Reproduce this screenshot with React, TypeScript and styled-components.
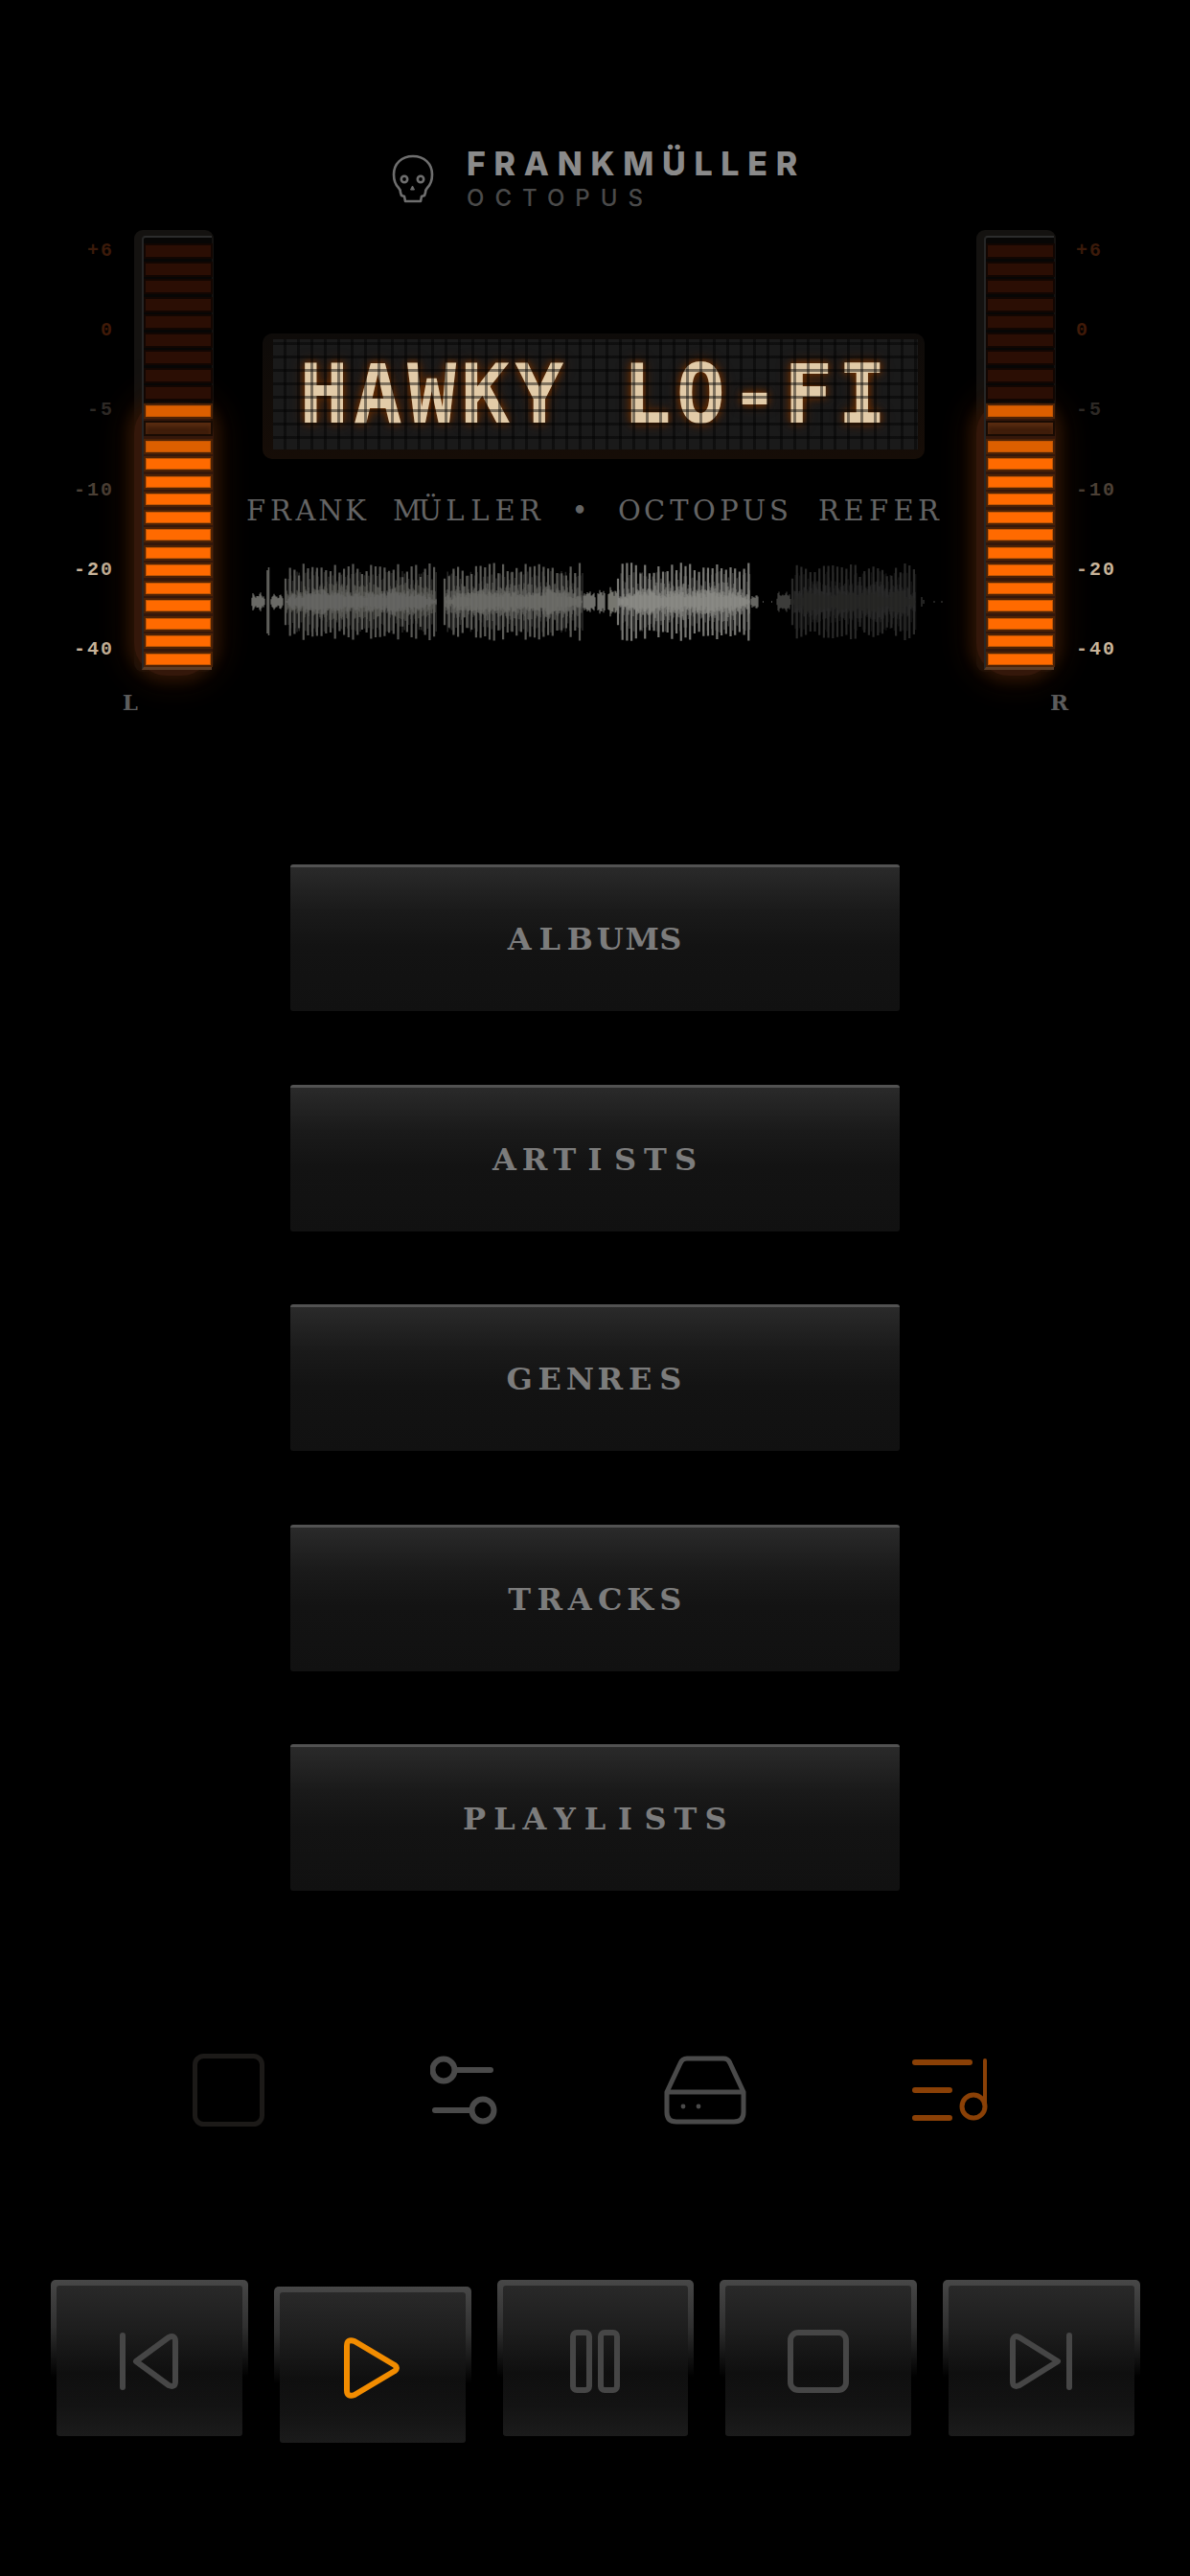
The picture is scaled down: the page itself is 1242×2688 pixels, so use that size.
import React from 'react';
import styled, { createGlobalStyle } from 'styled-components';

const MENU_ITEMS = ['ALBUMS', 'ARTISTS', 'GENRES', 'TRACKS', 'PLAYLISTS'];
const SCALE = [
  { text: '+6', color: '#3b1a0a' },
  { text: '0', color: '#401a08' },
  { text: '-5', color: '#2e2a26' },
  { text: '-10', color: '#4c4036' },
  { text: '-20', color: '#c9b59b' },
  { text: '-40', color: '#c9b59b' },
];

type Level = 'off' | 'hot' | 'flicker' | 'lit';

// top to bottom: 9 off, flickering band around -5, then solid
const SEGMENTS: Level[] = [
  ...Array<Level>(9).fill('off'),
  'hot',
  'flicker',
  'hot',
  ...Array<Level>(12).fill('lit'),
];

// small seeded generator so the wave form stays the same on every load
const makeRandom = (seed: number) => () => {
  seed = (seed * 16807) % 2147483647;
  return seed / 2147483647;
};

const CENTER = 45;

const bars = (from: number, to: number, step: number, min: number, max: number, seed: number) => {
  const random = makeRandom(seed);
  let d = '';
  for (let x = from; x < to; x += step) {
    const h = min + (max - min) * Math.sqrt(random());
    d += `M${x.toFixed(1)} ${(CENTER - h).toFixed(1)}V${(CENTER + h).toFixed(1)}`;
  }
  return d;
};

const blob = (from: number, to: number, height: number, noise: number, seed: number) => {
  const random = makeRandom(seed);
  let d = '';
  for (let x = from; x < to; x += 1) {
    const t = (x - from) / (to - from);
    const env = Math.min(1, Math.min(t, 1 - t) * 8) * (0.7 + 0.3 * Math.sin(t * 19 + seed) * Math.sin(t * 7));
    const h = height * env + random() * noise;
    d += `M${x} ${(CENTER - h).toFixed(1)}V${(CENTER + h).toFixed(1)}`;
  }
  return d;
};

const WaveSection: React.FC<{ from: number; to: number; seed: number; color: string; core: string }> = ({
  from,
  to,
  seed,
  color,
  core,
}) => (
  <>
    <path d={bars(from + 1, to, 2.2, 12, 32, seed + 7)} stroke={color} strokeWidth="1.6" opacity="0.4" />
    <path d={bars(from, to, 4.7, 24, 41, seed)} stroke={color} strokeWidth="2.2" opacity="0.95" />
    <path d={blob(from, to, 9, 13, seed + 3)} stroke={color} strokeWidth="1.2" opacity="0.8" />
    <path d={blob(from, to, 7, 7, seed + 5)} stroke={core} strokeWidth="1" opacity="0.9" />
  </>
);

const Waveform: React.FC = () => (
  <WaveSvg viewBox="0 0 730 90" aria-hidden="true">
    <g fill="none">
      <path d={blob(2, 17, 8, 2, 5)} stroke="#6a6a66" strokeWidth="1.2" />
      <path d="M19 12V78M20.5 9V80" stroke="#5e5e5a" strokeWidth="1.6" />
      <path d={blob(22, 36, 7, 2, 9)} stroke="#6a6a66" strokeWidth="1.2" />
      <WaveSection from={38} to={196} seed={11} color="#5c5c58" core="#6c6c68" />
      <WaveSection from={204} to={348} seed={23} color="#60605c" core="#72726e" />
      <path d={blob(348, 362, 9, 3, 13)} stroke="#6f6f6b" strokeWidth="1.2" />
      <path d={blob(363, 372, 12, 3, 14)} stroke="#6f6f6b" strokeWidth="1.2" />
      <path d={blob(374, 385, 13, 3, 15)} stroke="#76766f" strokeWidth="1.2" />
      <WaveSection from={385} to={523} seed={37} color="#7e7e7a" core="#8f8f8b" />
      <path d={blob(523, 532, 6, 2, 16)} stroke="#666662" strokeWidth="1.2" />
      <path d="M536 45H537M545 45H546" stroke="#4a4a48" strokeWidth="2" />
      <path d={blob(550, 566, 9, 2, 17)} stroke="#3c3c3a" strokeWidth="1.2" />
      <WaveSection from={567} to={696} seed={51} color="#2b2b2a" core="#262625" />
      <path d="M702 40V50M704 43V47M715 44V46M723 44V46" stroke="#2e2e2d" strokeWidth="1.5" />
    </g>
  </WaveSvg>
);

// the labels are set in a fixed pitch like a typewriter, the serif font we have is proportional
const SlabText: React.FC<{ text: string; pitch: number }> = ({ text, pitch }) => (
  <>
    {text.split('').map((char, i) => (
      <SlabChar key={i} $pitch={pitch}>
        {char}
      </SlabChar>
    ))}
  </>
);

const Meter: React.FC<{ side: 'left' | 'right' }> = ({ side }) => {
  const scale = (
    <Scale $side={side}>
      {SCALE.map((s) => (
        <ScaleMark key={s.text} $color={s.color}>
          {s.text}
        </ScaleMark>
      ))}
    </Scale>
  );

  return (
    <MeterGroup $side={side}>
      <MeterRow>
        {side === 'left' && scale}
        <MeterFrame>
          <MeterGlow />
          <MeterWell>
            {SEGMENTS.map((level, i) => (
              <Segment key={i} $level={level} />
            ))}
          </MeterWell>
        </MeterFrame>
        {side === 'right' && scale}
      </MeterRow>
      <Channel $side={side}>{side === 'left' ? 'L' : 'R'}</Channel>
    </MeterGroup>
  );
};

const App: React.FC = () => {
  return (
    <Page>
      <GlobalStyle />
      <Brand>
        <svg width="46" height="52" viewBox="0 0 46 52" fill="none" stroke="#6e6e6e" strokeWidth="2.6" strokeLinejoin="round">
          <path d="M23 2C11 2 3 10 3 21c0 6 2 11 5 14 2 2 2 3 2 5l1 3 3 1 1 5h16l1-5 3-1 1-3c0-2 0-3 2-5 3-3 5-8 5-14C43 10 35 2 23 2z" />
          <circle cx="14" cy="26" r="3.2" />
          <circle cx="31" cy="26" r="3.2" />
          <path d="M22.5 33l-2 4h4z" fill="#6e6e6e" strokeWidth="1" />
        </svg>
        <BrandText>
          <BrandName>FRANKMÜLLER</BrandName>
          <BrandSub>OCTOPUS</BrandSub>
        </BrandText>
      </Brand>

      <Deck>
        <Meter side="left" />
        <NowPlaying>
          <Display>
            <DisplayPanel>
              <DisplayText>HAWKY LO-FI</DisplayText>
              <DisplayGrid />
            </DisplayPanel>
          </Display>
          <Marquee>
            <SlabText text="FRANK MÜLLER • OCTOPUS REFER" pitch={26} />
          </Marquee>
          <Waveform />
        </NowPlaying>
        <Meter side="right" />
      </Deck>

      <Menu>
        {MENU_ITEMS.map((item) => (
          <MenuButton key={item}>
            <SlabText text={item} pitch={31.5} />
          </MenuButton>
        ))}
      </Menu>

      <Tabs>
        <svg width="75" height="76" viewBox="0 0 75 76" fill="none" stroke="#1c1a18" strokeWidth="5">
          <rect x="2.5" y="2.5" width="70" height="71" rx="9" />
        </svg>
        <svg width="70" height="72" viewBox="0 0 70 72" fill="none" stroke="#4a4a4a" strokeWidth="6" strokeLinecap="round">
          <circle cx="14" cy="15" r="11.5" />
          <path d="M27 15h36" />
          <circle cx="55" cy="57" r="11.5" />
          <path d="M5 57h37" />
        </svg>
        <svg width="86" height="72" viewBox="0 0 86 72" fill="none" stroke="#4a4a4a" strokeWidth="5" strokeLinejoin="round">
          <path d="M3 38l14-30q2-5 7-5h38q5 0 7 5l14 30v21q0 10-10 10H13Q3 69 3 59z" />
          <path d="M3 38h80" />
          <circle cx="20" cy="53" r="2.4" fill="#4a4a4a" stroke="none" />
          <circle cx="36" cy="53" r="2.4" fill="#4a4a4a" stroke="none" />
        </svg>
        <svg width="80" height="72" viewBox="0 0 80 72" fill="none" stroke="#8a4006" strokeLinecap="round">
          <path d="M3 7h57M3 36h36M3 65h36" strokeWidth="6" />
          <circle cx="64" cy="53" r="12" strokeWidth="5" />
          <path d="M76 53V5" strokeWidth="4" />
        </svg>
      </Tabs>

      <Transport>
        <TransportButton>
          <TransportFace>
            <svg width="62" height="60" viewBox="0 0 62 60" fill="none" stroke="#464646" strokeWidth="6" strokeLinecap="round" strokeLinejoin="round">
              <path d="M3 3v54" />
              <path d="M17 30L51 5q7-3 7 4v42q0 7-7 4z" />
            </svg>
          </TransportFace>
        </TransportButton>
        <TransportButton $pressed>
          <TransportFace>
            <svg width="60" height="66" viewBox="0 0 60 66" fill="none" stroke="#f28c00" strokeWidth="6" strokeLinejoin="round">
              <path d="M3 10q0-8 8-5l42 25q4 3 0 6L11 61q-8 3-8-5z" />
            </svg>
          </TransportFace>
        </TransportButton>
        <TransportButton>
          <TransportFace>
            <svg width="52" height="66" viewBox="0 0 52 66" fill="none" stroke="#464646" strokeWidth="6">
              <rect x="3" y="3" width="17" height="60" rx="4" />
              <rect x="32" y="3" width="17" height="60" rx="4" />
            </svg>
          </TransportFace>
        </TransportButton>
        <TransportButton>
          <TransportFace>
            <svg width="64" height="66" viewBox="0 0 64 66" fill="none" stroke="#464646" strokeWidth="6">
              <rect x="3" y="3" width="58" height="60" rx="8" />
            </svg>
          </TransportFace>
        </TransportButton>
        <TransportButton>
          <TransportFace>
            <svg width="66" height="60" viewBox="0 0 66 60" fill="none" stroke="#464646" strokeWidth="6" strokeLinecap="round" strokeLinejoin="round">
              <path d="M3 9q0-7 7-4l40 25L10 55q-7 3-7-4z" />
              <path d="M62 3v54" />
            </svg>
          </TransportFace>
        </TransportButton>
      </Transport>
    </Page>
  );
};

export default App;

const GlobalStyle = createGlobalStyle`
  html, body {
    margin: 0;
    padding: 0;
    background: #000;
  }
`;

const Page = styled.div`
  width: 1242px;
  height: 2688px;
  background: #000;
  overflow: hidden;
  display: flex;
  flex-direction: column;
`;

const Brand = styled.header`
  display: flex;
  align-items: center;
  gap: 33px;
  padding: 152px 0 0 408px;
`;

const BrandText = styled.div`
  display: flex;
  flex-direction: column;
  gap: 3px;
`;

const BrandName = styled.div`
  font-family: Inter, 'Liberation Sans', sans-serif;
  font-size: 34px;
  line-height: 38px;
  font-weight: 800;
  letter-spacing: 8.7px;
  color: #8a8a8a;
`;

const BrandSub = styled.div`
  font-family: Inter, 'Liberation Sans', sans-serif;
  font-size: 24px;
  line-height: 28px;
  font-weight: 500;
  letter-spacing: 11px;
  color: #4a4a4a;
`;

const Deck = styled.section`
  display: grid;
  grid-template-columns: 223px 796px 223px;
  margin-top: 19px;
`;

const MeterGroup = styled.div<{ $side: 'left' | 'right' }>`
  display: flex;
  flex-direction: column;
  align-items: ${(p) => (p.$side === 'left' ? 'flex-end' : 'flex-start')};
`;

const MeterRow = styled.div`
  display: flex;
`;

const Scale = styled.div<{ $side: 'left' | 'right' }>`
  width: 60px;
  height: 461px;
  box-sizing: border-box;
  padding: 10px 0 11px;
  display: flex;
  flex-direction: column;
  justify-content: space-between;
  text-align: ${(p) => (p.$side === 'left' ? 'right' : 'left')};
  ${(p) => (p.$side === 'left' ? 'margin-right: 23px;' : 'margin-left: 21px;')}
`;

const ScaleMark = styled.div<{ $color: string }>`
  font-family: 'Liberation Mono', monospace;
  font-size: 20px;
  line-height: 24px;
  font-weight: 700;
  letter-spacing: 2px;
  margin-right: -2px;
  color: ${(p) => p.$color};
`;

const MeterFrame = styled.div`
  position: relative;
  width: 83px;
  height: 461px;
  box-sizing: border-box;
  padding: 6px 2px 2px 8px;
  border-radius: 9px;
  background: #141210;
`;

const MeterGlow = styled.div`
  position: absolute;
  top: 178px;
  bottom: -4px;
  left: 0;
  right: 0;
  border-radius: 34px;
  background: #34170a;
  box-shadow: 0 0 12px 6px #281204, 0 0 30px 12px rgba(44, 18, 3, 0.5);
`;

const MeterWell = styled.div`
  position: relative;
  height: 100%;
  box-sizing: border-box;
  padding: 6px 1px 0 0;
  border-top: 2px solid #2c2c2c;
  border-left: 2px solid #262626;
  border-bottom: 3px solid #5b3c25;
  border-top-left-radius: 4px;
  background: linear-gradient(#070605 0, #070605 38%, transparent 39%);
  display: flex;
  flex-direction: column;
  justify-content: space-between;
`;

const Segment = styled.div<{ $level: Level }>`
  height: 12px;
  margin: 2px 0 2px 2px;
  background: ${(p) =>
    p.$level === 'lit' ? '#ff6a00' : p.$level === 'hot' ? '#dc5f00' : p.$level === 'flicker' ? '#3f1d0a' : '#2b0e04'};
  box-shadow: ${(p) =>
    p.$level === 'off'
      ? '0 0 0 2px #120602'
      : p.$level === 'flicker'
        ? '0 0 0 2px #190b03, inset 0 4px 4px #5a2c10'
        : 'inset 0 0 0 1px #c25604, 0 0 0 2px #4c2206'};
`;

const Channel = styled.div<{ $side: 'left' | 'right' }>`
  font-family: 'DejaVu Serif', serif;
  font-size: 23px;
  line-height: 28px;
  font-weight: 700;
  color: #5e5e5e;
  margin-top: 18px;
  ${(p) => (p.$side === 'left' ? 'margin-right: 79px;' : 'margin-left: 77px;')}
`;

const NowPlaying = styled.div`
  display: flex;
  flex-direction: column;
  padding-top: 108px;
  min-width: 0;
`;

const Display = styled.div`
  width: 691px;
  height: 131px;
  box-sizing: border-box;
  margin-left: 51px;
  padding: 6px 7px 10px 11px;
  border-radius: 10px;
  background: linear-gradient(#0e0b09, #160d07);
`;

const DisplayPanel = styled.div`
  position: relative;
  height: 100%;
  background: #1a1a1a;
  display: flex;
  align-items: center;
  justify-content: center;
  overflow: hidden;
`;

const DisplayText = styled.div`
  font-family: 'DejaVu Sans Mono', monospace;
  font-size: 85px;
  line-height: 115px;
  font-weight: 700;
  letter-spacing: 5px;
  color: #e2cba8;
  white-space: pre;
  text-shadow: 0 0 7px #6e2f00, 0 0 14px #5a2600;
`;

const DisplayGrid = styled.div`
  position: absolute;
  inset: 0;
  background-image: repeating-linear-gradient(90deg, transparent 0 11px, rgba(0, 0, 0, 0.45) 11px 14px),
    repeating-linear-gradient(0deg, transparent 0 11px, rgba(0, 0, 0, 0.45) 11px 14px);
`;

const SlabChar = styled.span<{ $pitch: number }>`
  display: inline-block;
  width: ${(p) => p.$pitch}px;
  text-align: center;
`;

const Marquee = styled.div`
  margin: 34px 0 0 31px;
  width: 732px;
  overflow: hidden;
  white-space: pre;
  font-family: 'DejaVu Serif', serif;
  font-size: 29px;
  line-height: 40px;
  color: #646464;
`;

const WaveSvg = styled.svg`
  display: block;
  width: 730px;
  height: 90px;
  margin: 30px 0 0 37px;
`;

const Menu = styled.nav`
  display: flex;
  flex-direction: column;
  gap: 76.5px;
  padding: 0 303px;
  margin-top: 155px;
`;

const MenuButton = styled.div`
  height: 153px;
  box-sizing: border-box;
  display: flex;
  align-items: center;
  justify-content: center;
  border-top: 3px solid #525252;
  border-radius: 3px;
  background: linear-gradient(#2a2a2a 0, #1a1a1a 30%, #131313 55%, #111 100%);
  font-family: 'DejaVu Serif', serif;
  font-size: 32px;
  font-weight: 700;
  color: #7c7c7c;
`;

const Tabs = styled.div`
  display: flex;
  align-items: center;
  justify-content: space-between;
  padding: 0 210px 0 201px;
  margin-top: 170px;
`;

const Transport = styled.div`
  display: grid;
  grid-template-columns: repeat(5, 1fr);
  gap: 27px;
  padding: 0 52px 0 53px;
  margin-top: 160px;
`;

const TransportButton = styled.div<{ $pressed?: boolean }>`
  height: 163px;
  box-sizing: border-box;
  padding: 6px 6px 0;
  border-radius: 5px;
  background: linear-gradient(#474747 0, #303030 30%, #000 62%);
  ${(p) => p.$pressed && 'transform: translateY(7px);'}
`;

const TransportFace = styled.div`
  height: 100%;
  display: flex;
  align-items: center;
  justify-content: center;
  border-radius: 3px;
  background: linear-gradient(#292929 0, #1d1d1d 30%, #0f0f0f 58%, #131313 80%, #1b1b1b 100%);
`;
